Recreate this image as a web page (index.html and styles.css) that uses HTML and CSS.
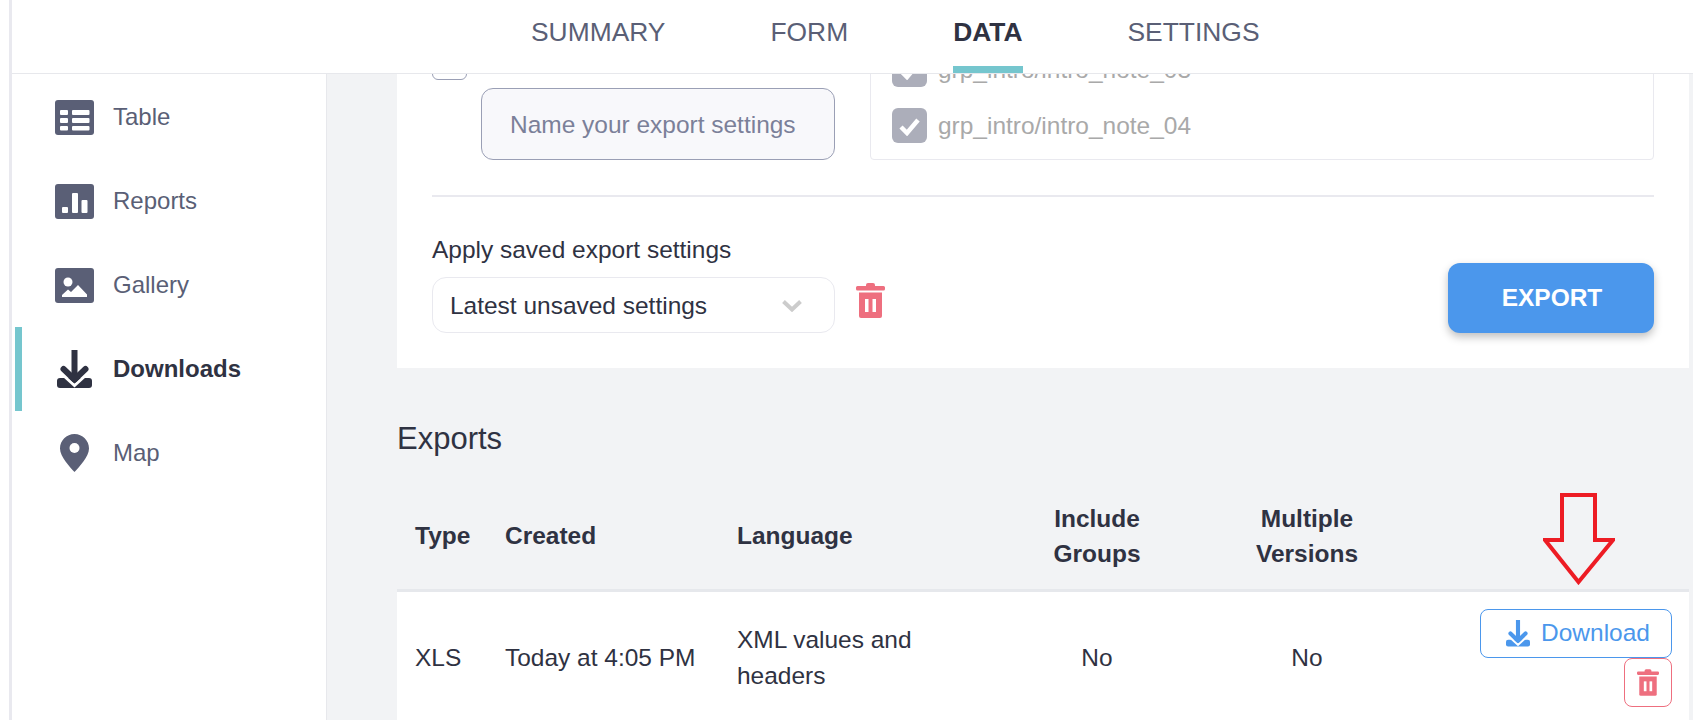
FILE: index.html
```html
<!DOCTYPE html>
<html lang="en">
<head>
<meta charset="utf-8">
<title>Data downloads</title>
<link rel="stylesheet" href="styles.css">
</head>
<body>
<div class="app">
  <header class="topbar">
    <nav class="tabs">
      <a class="tab">SUMMARY</a>
      <a class="tab">FORM</a>
      <a class="tab tab-active">DATA</a>
      <a class="tab">SETTINGS</a>
    </nav>
  </header>
  <div class="main">
    <aside class="sidebar">
      <a class="side-item">
        <span class="side-icon"><svg width="39" height="35" viewBox="0 0 39 35"><rect width="39" height="35" rx="3" fill="#5a5f76"/><g fill="#fff"><rect x="5" y="10" width="8" height="5" rx="1"/><rect x="17" y="10" width="17.500" height="5" rx="1"/><rect x="5" y="18" width="8" height="5" rx="1"/><rect x="17" y="18" width="17.500" height="5" rx="1"/><rect x="5" y="26" width="8" height="4.500" rx="1"/><rect x="17" y="26" width="17.500" height="4.500" rx="1"/></g></svg></span>
        <span>Table</span>
      </a>
      <a class="side-item">
        <span class="side-icon"><svg width="39" height="35" viewBox="0 0 39 35"><rect width="39" height="35" rx="3" fill="#5a5f76"/><g fill="#fff"><rect x="7" y="23" width="6" height="6" rx="1"/><rect x="17" y="9" width="6" height="20" rx="1"/><rect x="26.500" y="16" width="6" height="13" rx="1"/></g></svg></span>
        <span>Reports</span>
      </a>
      <a class="side-item">
        <span class="side-icon"><svg width="39" height="35" viewBox="0 0 39 35"><rect width="39" height="35" rx="3" fill="#5a5f76"/><circle cx="13" cy="14" r="4.500" fill="#fff"/><path d="M7 29v-2l6-5.500 3 2.500 7-7 9 9.500v2.500z" fill="#fff"/></svg></span>
        <span>Gallery</span>
      </a>
      <a class="side-item side-active">
        <span class="side-icon"><svg width="35" height="38" viewBox="0 0 35 38"><path d="M3 28h29a3 3 0 0 1 3 3v4a3 3 0 0 1-3 3H3a3 3 0 0 1-3-3v-4a3 3 0 0 1 3-3z" fill="#2f3242"/><path d="M7 26l10.500 9.500L28 26" fill="none" stroke="#fff" stroke-width="3"/><path d="M17.500 0v28" stroke="#2f3242" stroke-width="6" stroke-linecap="round"/><path d="M6.500 19l11 10.500L28.500 19" fill="none" stroke="#2f3242" stroke-width="6" stroke-linecap="round" stroke-linejoin="round"/></svg></span>
        <span>Downloads</span>
      </a>
      <a class="side-item">
        <span class="side-icon"><svg width="29" height="38" viewBox="0 0 29 38"><path d="M14.500 0C6.500 0 0 6.500 0 14.500 0 23 10 33 14.500 38 19 33 29 23 29 14.500 29 6.500 22.500 0 14.500 0z" fill="#5a5f76"/><circle cx="14.500" cy="14" r="5" fill="#fff"/></svg></span>
        <span>Map</span>
      </a>
    </aside>
    <main class="content">
      <section class="card">
        <div class="setup-row">
          <div class="setup-left">
            <span class="checkbox-empty"></span>
            <div class="name-input">Name your export settings</div>
          </div>
          <div class="question-box">
            <label class="question">
              <span class="checkbox-on"><svg width="23" height="20" viewBox="0 0 23 20"><path d="M3 11l6 6L20 4" fill="none" stroke="#fff" stroke-width="4.500"/></svg></span>
              <span>grp_intro/intro_note_03</span>
            </label>
            <label class="question">
              <span class="checkbox-on"><svg width="23" height="20" viewBox="0 0 23 20"><path d="M3 11l6 6L20 4" fill="none" stroke="#fff" stroke-width="4.500"/></svg></span>
              <span>grp_intro/intro_note_04</span>
            </label>
          </div>
        </div>
        <div class="divider"></div>
        <div class="apply-row">
          <div class="apply-left">
            <div class="apply-label">Apply saved export settings</div>
            <div class="apply-controls">
              <div class="select">
                <span>Latest unsaved settings</span>
                <svg width="20" height="12" viewBox="0 0 20 12"><path d="M1.500 1.500L10 9.500l8.500-8" fill="none" stroke="#ccc" stroke-width="4"/></svg>
              </div>
              <svg class="apply-trash" width="29" height="35" viewBox="0 0 29 35"><path d="M10 3V2a2 2 0 0 1 2-2h5a2 2 0 0 1 2 2v1h8.500a1.500 1.500 0 0 1 1.500 1.500V6a1.500 1.500 0 0 1-1.500 1.500h-26A1.500 1.500 0 0 1 0 6V4.500A1.500 1.500 0 0 1 1.500 3z" fill="#ee6f7f"/><path d="M3 9.500h23V33a2 2 0 0 1-2 2H5a2 2 0 0 1-2-2z" fill="#ee6f7f"/><rect x="9" y="16" width="3.500" height="13" fill="#fff"/><rect x="16.500" y="16" width="3.500" height="13" fill="#fff"/></svg>
            </div>
          </div>
          <button class="export-btn">EXPORT</button>
        </div>
      </section>
      <h2 class="exports-title">Exports</h2>
      <table class="exports">
        <colgroup>
          <col class="col-type"><col class="col-created"><col class="col-lang"><col class="col-groups"><col class="col-versions"><col class="col-action">
        </colgroup>
        <thead>
          <tr>
            <th class="first">Type</th>
            <th>Created</th>
            <th>Language</th>
            <th class="center">Include<br>Groups</th>
            <th class="center">Multiple<br>Versions</th>
            <th></th>
          </tr>
        </thead>
        <tbody>
          <tr>
            <td class="first">XLS</td>
            <td>Today at 4:05 PM</td>
            <td>XML values and<br>headers</td>
            <td class="center">No</td>
            <td class="center">No</td>
            <td class="actions">
              <button class="download-btn">
                <svg width="24" height="27" viewBox="0 0 35 38"><path d="M3 28h29a3 3 0 0 1 3 3v4a3 3 0 0 1-3 3H3a3 3 0 0 1-3-3v-4a3 3 0 0 1 3-3z" fill="#4b97ec"/><path d="M7 26l10.500 9.500L28 26" fill="none" stroke="#fff" stroke-width="3"/><path d="M17.500 0v28" stroke="#4b97ec" stroke-width="6" stroke-linecap="round"/><path d="M6.500 19l11 10.500L28.500 19" fill="none" stroke="#4b97ec" stroke-width="6" stroke-linecap="round" stroke-linejoin="round"/></svg>
                <span>Download</span>
              </button>
              <button class="trash-btn">
                <svg width="22" height="27" viewBox="0 0 29 35"><path d="M10 3V2a2 2 0 0 1 2-2h5a2 2 0 0 1 2 2v1h8.500a1.500 1.500 0 0 1 1.500 1.500V6a1.500 1.500 0 0 1-1.500 1.500h-26A1.500 1.500 0 0 1 0 6V4.500A1.500 1.500 0 0 1 1.500 3z" fill="#ee6f7f"/><path d="M3 9.500h23V33a2 2 0 0 1-2 2H5a2 2 0 0 1-2-2z" fill="#ee6f7f"/><rect x="9" y="16" width="3.500" height="13" fill="#fff"/><rect x="16.500" y="16" width="3.500" height="13" fill="#fff"/></svg>
              </button>
            </td>
          </tr>
        </tbody>
      </table>
    </main>
  </div>
  <svg class="annotation-arrow" width="72" height="92" viewBox="0 0 72 92"><path d="M19 2h33v45h18L35.500 89 2 47h17z" fill="none" stroke="#ed1c24" stroke-width="4"/></svg>
</div>
</body>
</html>
```

FILE: styles.css
```css
* { box-sizing: border-box; }
html, body { margin: 0; padding: 0; height: 720px; overflow: hidden; background: #fff; }
body { font-family: "Liberation Sans", Arial, sans-serif; color: #2f3242; font-size: 24.48px; }

.app { position: relative; height: 720px; margin-left: 9px; border-left: 3px solid #e9e9ef; display: flex; flex-direction: column; overflow: hidden; }

.topbar { flex: none; height: 74px; border-bottom: 1px solid #e7e8ec; background: #fff; position: relative; z-index: 2; }
.tabs { display: flex; gap: 105px; padding-left: 519px; height: 73px; }
.tab { height: 73px; line-height: 64px; font-size: 26.4px; color: #5a5f76; }
.tab-active { font-weight: 700; color: #2f3242; border-bottom: 7px solid #75c6ce; }

.main { flex: 1; display: flex; min-height: 0; }

.sidebar { flex: none; width: 315px; border-right: 1px solid #e7e8ec; padding-top: 1px; background: #fff; font-size: 24px; }
.side-item { display: flex; align-items: center; height: 84px; margin-left: 3px; padding-left: 33px; border-left: 7px solid transparent; color: #5a5f76; }
.side-icon { flex: none; width: 39px; margin-right: 19px; display: flex; justify-content: center; }
.side-icon svg { display: block; }
.side-active { border-left-color: #75c6ce; color: #2f3242; font-weight: 700; }

.content { flex: 1; min-width: 0; background: #f2f3f5; padding: 0 4px 0 70px; overflow: hidden; }

.card { background: #fff; margin-top: -40px; padding: 0 35px 35px; }
.setup-row { display: flex; }
.setup-left { flex: none; width: 438px; padding-top: 11px; }
.checkbox-empty { display: block; width: 35px; height: 35px; border: 1px solid #9a9fb5; border-radius: 6px; background: #fff; }
.name-input { margin: 8px 0 0 49px; width: 354px; height: 72px; line-height: 72px; padding-left: 28px; font-size: 24.48px; color: #7b8099; background: #f8f8fb; border: 1px solid #9a9fb5; border-radius: 12px; }
.question-box { flex: 1; padding: 17px 0 16px 21px; border: 1px solid #e9e9ef; border-radius: 4px; display: flex; flex-direction: column; gap: 21px; }
.question { display: flex; align-items: center; height: 35px; font-size: 24.48px; color: #a9a9a9; }
.checkbox-on { flex: none; width: 35px; height: 35px; margin-right: 11px; border-radius: 6px; background: #acaeba; display: flex; align-items: center; justify-content: center; }

.divider { height: 2px; background: #e9e9ef; margin-top: 35px; }

.apply-row { display: flex; justify-content: space-between; align-items: flex-end; padding-top: 35px; }
.apply-label { font-size: 24.48px; line-height: 36px; margin-bottom: 9px; }
.apply-controls { display: flex; align-items: flex-start; }
.select { width: 403px; height: 56px; padding: 2px 32px 0 17px; border: 1px solid #e9e9ef; border-radius: 14px; display: flex; align-items: center; justify-content: space-between; font-size: 24.48px; }
.apply-trash { margin: 6px 0 0 21px; display: block; }
.export-btn { width: 206px; height: 70px; border: 0; border-radius: 12px; background: #4b97ec; color: #fff; font: 700 24.48px "Liberation Sans", Arial, sans-serif; padding: 0 0 0 2px; box-shadow: 0 4px 8px rgba(0, 0, 0, .25); }

.exports-title { margin: 49px 0 20px; font-size: 31px; line-height: 44px; font-weight: 400; }

.exports { width: 1292px; table-layout: fixed; border-collapse: collapse; }
.col-type { width: 108px; }
.col-created { width: 232px; }
.col-lang { width: 253px; }
.col-groups { width: 214px; }
.col-versions { width: 206px; }
.col-action { width: 279px; }
.exports th { height: 109px; padding: 2px 0 0; text-align: left; font-weight: 700; line-height: 35px; border-bottom: 3px solid #e6e8ec; }
.exports td { height: 134px; padding: 0; background: #fff; line-height: 36px; }
.exports .first { padding-left: 18px; }
.exports .center { text-align: center; }
.exports .actions { padding-right: 17px; }

.download-btn, .trash-btn { display: flex; align-items: center; justify-content: center; height: 49px; margin-left: auto; background: #fff; border-radius: 8px; padding: 0; }
.download-btn { width: 192px; gap: 11px; padding-left: 4px; border: 1px solid #4b97ec; color: #4b97ec; font: 24.48px "Liberation Sans", Arial, sans-serif; }
.trash-btn { width: 48px; border: 1px solid #ee6f7f; }

.annotation-arrow { position: absolute; left: 1531px; top: 493px; z-index: 3; }
```
